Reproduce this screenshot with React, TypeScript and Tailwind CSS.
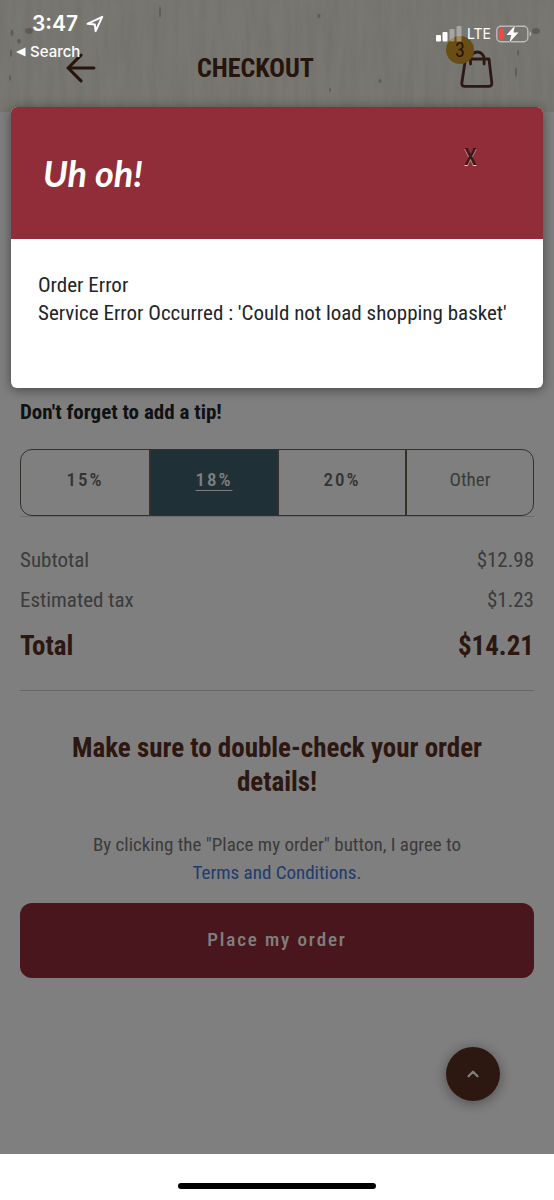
import { useState } from "react"
import { ArrowLeft, ChevronUp } from "lucide-react"

const tips = [
  { id: "15", label: "15%" },
  { id: "18", label: "18%" },
  { id: "20", label: "20%" },
  { id: "other", label: "Other" },
]

const totals = [
  { label: "Subtotal", amount: "$12.98" },
  { label: "Estimated tax", amount: "$1.23" },
]

function StatusBar() {
  return (
    <div className="pointer-events-none absolute inset-x-0 top-0 z-30 flex justify-between pt-3 pr-[22px] pl-4 font-['Inter',sans-serif] text-white">
      <div>
        <div className="flex items-center gap-2 pl-4 text-[21px] leading-6 font-semibold">
          <span>3:47</span>
          <svg viewBox="0 0 18 18" className="size-[18px]" fill="none" stroke="currentColor" strokeWidth="2" strokeLinejoin="round">
            <path d="M1.5 8.8 16.2 1.8 9.6 16.2 8.8 9.4Z" />
          </svg>
        </div>
        <div className="flex items-center gap-1 pt-1 text-[15px] leading-6 font-medium">
          <svg viewBox="0 0 10 10" className="size-[10px]" fill="currentColor">
            <path d="M0 5 9.5 0.5v9Z" />
          </svg>
          <span>Search</span>
        </div>
      </div>
      <div className="flex h-11 items-center gap-[5px] text-sm">
        <svg viewBox="0 0 26 16" className="h-4 w-[26px]" fill="currentColor">
          <rect x="0" y="9" width="5" height="6.5" rx="1" />
          <rect x="6.5" y="6" width="5" height="9.5" rx="1" />
          <rect x="13.5" y="3" width="5" height="12.5" rx="1" opacity="0.35" />
          <rect x="20.5" y="0" width="5" height="15.5" rx="1" opacity="0.35" />
        </svg>
        <span>LTE</span>
        <svg viewBox="0 0 36 18" className="h-[18px] w-9">
          <rect x="0.8" y="1.2" width="31" height="15.6" rx="4" fill="none" stroke="#fff" strokeOpacity="0.5" strokeWidth="1.4" />
          <path d="M33.6 6.5c2 .8 2 4.2 0 5Z" fill="#fff" fillOpacity="0.5" />
          <rect x="2.8" y="3.2" width="5" height="11.6" rx="2" fill="#fb4540" />
          <path d="M19 0.5 10.5 10h4.8L13.4 17.5 22.4 7.6h-5Z" fill="#fff" stroke="#7a7973" strokeWidth="1" paintOrder="stroke" />
        </svg>
      </div>
    </div>
  )
}

function WoodTexture() {
  return (
    <svg className="absolute inset-0 size-full" viewBox="0 0 554 112" preserveAspectRatio="none" aria-hidden="true">
      <filter id="grain" x="0" y="0" width="100%" height="100%">
        <feTurbulence type="fractalNoise" baseFrequency="0.12 0.015" numOctaves="3" seed="4" />
        <feColorMatrix values="0 0 0 0 0.4  0 0 0 0 0.39  0 0 0 0 0.34  0.3 0 0 0 -0.09" />
      </filter>
      <rect width="554" height="112" filter="url(#grain)" />
      <g fill="#9a9070" opacity="0.55">
        <ellipse cx="29" cy="31" rx="4" ry="3" />
        <ellipse cx="19" cy="41" rx="2" ry="2.5" />
        <ellipse cx="12" cy="33" rx="1.5" ry="3" />
        <ellipse cx="11" cy="53" rx="1" ry="4" />
        <ellipse cx="10" cy="78" rx="1" ry="3" />
        <ellipse cx="160" cy="12" rx="1" ry="6" />
        <ellipse cx="319" cy="16" rx="1.5" ry="2" />
        <ellipse cx="380" cy="81" rx="1.5" ry="2" />
        <ellipse cx="330" cy="90" rx="1" ry="2" />
        <ellipse cx="536" cy="31" rx="4" ry="3" />
        <ellipse cx="518" cy="53" rx="1" ry="3" />
        <ellipse cx="516" cy="72" rx="1" ry="5" />
      </g>
    </svg>
  )
}

function Header() {
  return (
    <header className="relative flex h-28 items-center bg-[#f1efe4] pt-6 pr-[60px] pl-[59px] text-[#4e2817]">
      <WoodTexture />
      <button className="relative" aria-label="Back">
        <ArrowLeft className="size-11" strokeWidth={1.7} />
      </button>
      <h1 className="relative mr-13 flex-1 text-center text-[26px] font-bold">CHECKOUT</h1>
      <button className="relative" aria-label="Shopping bag, 3 items">
        <svg viewBox="0 0 34 40" className="h-10 w-[34px]" fill="none" stroke="#5a3029" strokeWidth="2.8" strokeLinecap="round" strokeLinejoin="round">
          <path d="M5.5 11h23.5l2.8 24q.2 3.400-3 3.400h-24q-3.200 0-3-3.400Z" />
          <path d="M10.500 16V11a6.800 7 0 0 1 13.600 0V16" />
        </svg>
        <span className="absolute -top-3 -left-[14px] flex size-7 items-center justify-center rounded-full bg-[#d39a26] text-xl text-[#4e2817]">
          3
        </span>
      </button>
    </header>
  )
}

function ErrorDialog({ onClose }: { onClose: () => void }) {
  return (
    <div
      role="dialog"
      aria-labelledby="error-title"
      className="absolute inset-x-[11px] top-[107px] z-20 overflow-hidden rounded-md bg-white shadow-[0_2px_12px_rgba(0,0,0,0.45)]"
    >
      <div className="flex h-[132px] items-center justify-between bg-[#902d38] pr-[66px] pl-8">
        <h2 id="error-title" className="font-['Lato',cursive] text-4xl font-bold text-white italic">
          Uh oh!
        </h2>
        <button onClick={onClose} aria-label="Close" className="pb-8 text-2xl leading-8 font-medium text-[#42131a] [text-shadow:0_1px_0_#ddb]">
          X
        </button>
      </div>
      <div className="h-[149px] px-[27px] pt-8 text-[21px] leading-7 text-[#212529]">
        <p>Order Error</p>
        <p>Service Error Occurred : 'Could not load shopping basket'</p>
      </div>
    </div>
  )
}

export default function App() {
  const [tip, setTip] = useState("18")
  const [showError, setShowError] = useState(true)

  return (
    <div className="flex min-h-screen flex-col bg-white font-['Roboto_Condensed','Liberation_Sans_Narrow',sans-serif]">
      <div className="relative flex-1">
        <StatusBar />
        <Header />
        <main className="px-5 pt-[286px] pb-[176px] text-[#777]">
          <h2 className="text-[21px] leading-7 font-bold text-[#212529]">Don't forget to add a tip!</h2>
          <div className="mt-[23px] border-b border-[#ddd]">
            <div className="grid h-[67px] grid-cols-4 overflow-hidden rounded-xl border border-[#6b6355]">
              {tips.map((t) => (
                <button
                  key={t.id}
                  onClick={() => setTip(t.id)}
                  className={
                    t.id === tip
                      ? "border-[#6b6355] bg-[#40606f] pb-1 text-[19px] font-medium tracking-widest text-white underline underline-offset-4 not-first:border-l-2"
                      : t.id === "other"
                        ? "border-[#6b6355] pb-1 text-[19px] text-[#777] not-first:border-l-2"
                        : "border-[#6b6355] pb-1 text-[19px] font-medium tracking-widest text-[#666] not-first:border-l-2"
                  }
                >
                  {t.label}
                </button>
              ))}
            </div>
          </div>

          <dl className="border-b border-[#ccc] pt-[23px] pb-[22px] text-[21px] leading-10">
            {totals.map((row) => (
              <div key={row.label} className="flex justify-between">
                <dt>{row.label}</dt>
                <dd>{row.amount}</dd>
              </div>
            ))}
            <div className="flex justify-between pt-1 text-[27px] leading-[44px] font-bold text-[#5a3023]">
              <dt>Total</dt>
              <dd>$14.21</dd>
            </div>
          </dl>

          <section className="pt-10 text-center">
            <h2 className="px-10 text-[27px] leading-[34px] font-bold text-[#5a3023]">
              Make sure to double-check your order details!
            </h2>
            <p className="px-[60px] pt-8 text-[19px] leading-7">
              By clicking the "Place my order" button, I agree to{" "}
              <a href="#terms" className="inline-block text-[#3f78dc]">
                Terms and Conditions
              </a>
              .
            </p>
            <button className="mt-4 h-[75px] w-full rounded-xl bg-[#902d38] text-[19px] font-medium tracking-widest text-white">
              Place my order
            </button>
          </section>
        </main>

        <button
          aria-label="Back to top"
          className="absolute right-[54px] bottom-[53px] flex size-[54px] items-center justify-center rounded-full bg-[#5a3022] text-white shadow-[0_2px_14px_rgba(0,0,0,0.4)]"
        >
          <ChevronUp className="size-[18px]" strokeWidth={3} />
        </button>

        <div className="pointer-events-none absolute inset-0 z-10 bg-black/50" />
        {showError && <ErrorDialog onClose={() => setShowError(false)} />}
      </div>

      <footer className="flex h-[46px] items-end justify-center pb-[11px]">
        <div className="h-[6px] w-[198px] rounded-full bg-black" />
      </footer>
    </div>
  )
}
